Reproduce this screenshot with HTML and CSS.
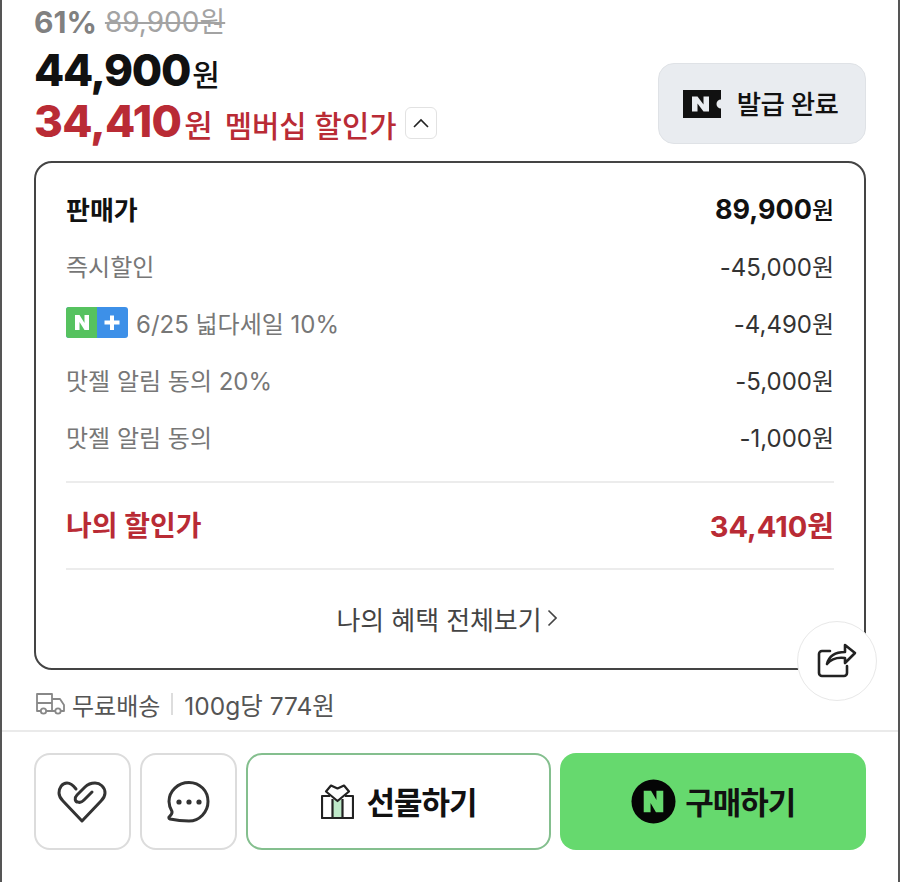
FILE: index.html
```html
<!DOCTYPE html>
<html lang="ko">
<head>
    <meta charset="UTF-8">
    <meta name="viewport" content="width=device-width, initial-scale=1.0">
    <title>구매하기</title>
    <link rel="stylesheet" href="styles.css">
</head>
<body>
    <div class="screen">
        <!-- Price summary -->
        <section class="summary">
            <div class="prices">
                <div class="list-price"><span class="rate">61%</span><s>89,900원</s></div>
                <div class="sale-price"><span class="num">44,900</span><span class="unit">원</span></div>
                <div class="member-price">
                    <span class="num">34,410</span><span class="unit">원</span>
                    <span class="member-label">멤버십 할인가</span>
                    <button class="toggle" aria-label="접기">
                        <svg width="18" height="10" viewBox="0 0 18 10" fill="none" stroke="#222" stroke-width="1.6"><path d="M2 9l7-7 7 7"/></svg>
                    </button>
                </div>
            </div>
            <button class="coupon">
                <svg class="coupon-icon" width="38" height="28" viewBox="0 0 38 28">
                    <path fill="#111" d="M0 0h38v9.500a4.500 4.500 0 0 0 0 9V28H0z"/>
                    <path fill="#e9ecf0" d="M9 6.500h5.500l6 8v-8H26v15h-5.500l-6-8v8H9z"/>
                </svg>
                <span>발급 완료</span>
            </button>
        </section>

        <!-- Discount breakdown -->
        <section class="detail">
            <div class="row row-strong"><span>판매가</span><span class="amount"><b>89,900</b>원</span></div>
            <div class="row"><span>즉시할인</span><span class="amount">-45,000원</span></div>
            <div class="row">
                <span class="row-label">
                    <svg width="62" height="31" viewBox="0 0 62 31">
                        <rect width="62" height="31" rx="3" fill="#3d90e8"/>
                        <path fill="#56c25f" d="M3 0h28v31H3a3 3 0 0 1-3-3V3a3 3 0 0 1 3-3z"/>
                        <path fill="#fff" d="M9 8h4.500l5 8V8H23v15h-4.500l-5-8v8H9zM44 8.500h4v5h5.500v4H48v5.500h-4V17.500h-5.500v-4H44z"/>
                    </svg>
                    6/25 넓다세일 10%
                </span>
                <span class="amount">-4,490원</span>
            </div>
            <div class="row"><span>맛젤 알림 동의 20%</span><span class="amount">-5,000원</span></div>
            <div class="row"><span>맛젤 알림 동의</span><span class="amount">-1,000원</span></div>
            <div class="row row-total"><span>나의 할인가</span><span class="amount">34,410원</span></div>
            <a class="more" href="#">나의 혜택 전체보기
                <svg width="10" height="18" viewBox="0 0 10 18" fill="none" stroke="#444" stroke-width="1.6"><path d="M1.500 1.500L9 9l-7.500 7.500"/></svg>
            </a>
            <button class="share" aria-label="공유">
                <svg width="40" height="36" viewBox="0 0 40 36" fill="none" stroke="#222" stroke-width="2.600" stroke-linejoin="round" stroke-linecap="round">
                    <path d="M13 8H5a3 3 0 0 0-3 3v19a3 3 0 0 0 3 3h22a3 3 0 0 0 3-3v-7"/>
                    <path d="M10 21c2-8 8-12 18-12V2l10 8-10 10v-5c-8-1-14 1-18 6z"/>
                </svg>
            </button>
        </section>

        <!-- Shipping -->
        <div class="shipping">
            <svg width="29" height="22" viewBox="6 6 29 22" fill="none" stroke="#888" stroke-width="1.800" stroke-linejoin="round">
                <path d="M10.500 24H7V7h15v17H16"/>
                <path d="M7 16h15M22 12h8l4 6v6h-3M22 24h3"/>
                <circle cx="13.500" cy="24" r="2.700"/>
                <circle cx="28" cy="24" r="2.700"/>
            </svg>
            <span>무료배송</span>
            <i class="sep"></i>
            <span class="unit-price">100g당 774원</span>
        </div>

        <!-- Bottom actions -->
        <footer class="actions">
            <button class="icon-btn" aria-label="찜하기">
                <svg width="64" height="52" viewBox="0 0 64 52" fill="none" stroke="#333" stroke-width="3" stroke-linecap="round" stroke-linejoin="round">
                    <path d="M26 13c-3-4-6-6-9-6-5 0-8 5-8 10 0 4 2 6 4 8l19 20 19-20c2-2 4-4 4-8 0-6-5-10-10-10-4 0-7 1-10 4l-8 8c-3 3-2 7 1 7 2 1 4 0 6-2l8-8"/>
                </svg>
            </button>
            <button class="icon-btn" aria-label="문의하기">
                <svg width="44" height="44" viewBox="0 0 44 44" fill="none" stroke="#333" stroke-width="3" stroke-linejoin="round">
                    <path d="M23 2.500c11 0 19 8.500 19 19s-8.500 19.500-19 19.500c-6 0-12-.5-19-2-1.500-.5-1.500-1.800-.5-2.500 1.800-1.500 2.800-3 2.500-5C4 28 3 25 3 21.500 3 11 12 2.500 23 2.500z"/>
                    <g fill="#333" stroke="none"><circle cx="13" cy="22" r="2.600"/><circle cx="23" cy="22" r="2.600"/><circle cx="33" cy="22" r="2.600"/></g>
                </svg>
            </button>
            <button class="gift-btn">
                <svg width="33" height="35" viewBox="8 6 33 35" fill="none" stroke="#222" stroke-width="2.200" stroke-linejoin="round">
                    <rect x="20" y="22" width="9" height="18" fill="#bfe9c9" stroke="none"/>
                    <path d="M17 18H9v22h31V18h-8M19.500 21v19M29.500 21v19"/>
                    <path d="M24.500 23L13 13.500 18 7.500l6.500 3 6.500-3 5 6z"/>
                </svg>
                <span class="btn-text">선물하기</span>
            </button>
            <button class="buy-btn">
                <svg width="45" height="45" viewBox="0 0 46 46">
                    <circle cx="23" cy="23" r="22.500" fill="#050505"/>
                    <path fill="#66d96e" d="M13 12h7.500l5.500 9.500V12h7v22h-7.500L20 24.500V34h-7z"/>
                </svg>
                <span class="btn-text">구매하기</span>
            </button>
        </footer>
    </div>
</body>
</html>
```

FILE: styles.css
```css
:root {
    --red: #b92b35;
    --green: #66d96e;
    --text: #111;
    --muted: #777;
}
* {
    margin: 0;
    padding: 0;
    box-sizing: border-box;
}
html, body {
    height: 100%;
    overflow: hidden;
}
body {
    font-family: Inter, "Noto Sans CJK KR", sans-serif;
    background-color: #fff;
    color: var(--text);
}
button {
    font-family: inherit;
    cursor: pointer;
}
.screen {
    height: 882px;
    border-left: 2px solid #555;
    border-right: 2px solid #555;
    display: flex;
    flex-direction: column;
}
/* Price summary */
.summary {
    height: 160px;
    padding: 0 32px;
    display: flex;
    justify-content: space-between;
    align-items: flex-start;
}
.list-price {
    height: 46px;
    line-height: 44px;
    font-size: 28px;
    color: #a3a3a3;
    display: flex;
    gap: 8px;
}
.list-price .rate {
    font-size: 30px;
    font-weight: 700;
    color: #808080;
}
.sale-price {
    height: 48px;
    line-height: 48px;
    font-weight: 800;
}
.num {
    font-size: 44px;
    font-weight: 800;
    letter-spacing: -1.3px;
}
.unit {
    font-size: 30px;
    font-weight: 500;
    margin-left: 2px;
}
.member-price {
    height: 56px;
    display: flex;
    align-items: baseline;
    color: var(--red);
}
.member-price .num {
    letter-spacing: -0.7px;
}
.member-price .unit {
    font-size: 31px;
    margin-left: 3px;
}
.member-label {
    font-size: 29.7px;
    font-weight: 500;
    margin-left: 12px;
}
.toggle {
    width: 32px;
    height: 32px;
    margin: 2px 0 0 8px;
    border: 1px solid #e2e2e2;
    border-radius: 6px;
    background: #fff;
    align-self: center;
    display: flex;
    align-items: center;
    justify-content: center;
}
.coupon {
    width: 208px;
    height: 81px;
    margin-top: 63px;
    padding-right: 3px;
    background-color: #e9ecf0;
    border: 1px solid #dfe2e6;
    border-radius: 16px;
    font-size: 26.5px;
    font-weight: 500;
    letter-spacing: -0.6px;
    color: var(--text);
    display: flex;
    align-items: center;
    justify-content: center;
    gap: 16px;
}
.coupon span {
    padding-bottom: 3px;
}
/* Discount breakdown */
.detail {
    position: relative;
    height: 509px;
    margin: 1px 32px 0;
    padding: 17px 30px 0;
    border: 2px solid #444;
    border-radius: 18px;
}
.row {
    height: 57px;
    display: flex;
    justify-content: space-between;
    align-items: center;
    font-size: 24px;
    color: var(--muted);
}
.row-label {
    display: flex;
    align-items: center;
    gap: 8px;
}
.amount {
    color: #333;
    font-size: 24px;
}
.row-strong {
    font-size: 26px;
    font-weight: 700;
    color: var(--text);
}
.row-strong .amount {
    color: var(--text);
    font-weight: 500;
}
.row-strong b {
    font-weight: 700;
    font-size: 27px;
}
.row-total {
    height: 89px;
    margin-top: 16px;
    padding-bottom: 4px;
    border-top: 2px solid #ececec;
    border-bottom: 2px solid #ececec;
    font-weight: 700;
    font-size: 28px;
    color: var(--red);
}
.row-total .amount {
    color: var(--red);
    font-size: 29px;
}
.more {
    height: 96px;
    padding-right: 7px;
    display: flex;
    align-items: center;
    justify-content: center;
    gap: 5px;
    font-size: 26px;
    letter-spacing: -0.1px;
    color: #444;
    text-decoration: none;
}
.share {
    position: absolute;
    right: -13px;
    bottom: -33px;
    width: 80px;
    height: 80px;
    border-radius: 50%;
    border: 1px solid #e8e8e8;
    background: #fff;
    display: flex;
    align-items: center;
    justify-content: center;
}
/* Shipping */
.shipping {
    height: 60px;
    padding: 8px 32px 0 34px;
    display: flex;
    align-items: center;
    gap: 7px;
    font-size: 24px;
    color: #555;
}
.unit-price {
    font-size: 24.5px;
}
.sep {
    width: 2px;
    height: 22px;
    margin: 0 4px;
    background-color: #ddd;
}
/* Bottom actions */
.actions {
    flex: 1;
    border-top: 2px solid #eaeaea;
    padding: 21px 32px 0;
    display: flex;
    align-items: flex-start;
    gap: 9px;
}
.icon-btn {
    width: 97px;
    height: 97px;
    background: #fff;
    border: 2px solid #dcdcdc;
    border-radius: 16px;
    display: flex;
    align-items: center;
    justify-content: center;
}
.gift-btn,
.buy-btn {
    width: 306px;
    height: 97px;
    border-radius: 16px;
    font-size: 31px;
    font-weight: 700;
    letter-spacing: -1px;
    color: var(--text);
    display: flex;
    align-items: center;
    justify-content: center;
}
.btn-text {
    padding-bottom: 3px;
}
.gift-btn {
    gap: 13px;
    background: #fff;
    border: 2px solid #84bf8e;
}
.buy-btn {
    gap: 9px;
    background-color: var(--green);
    border: none;
}
```
